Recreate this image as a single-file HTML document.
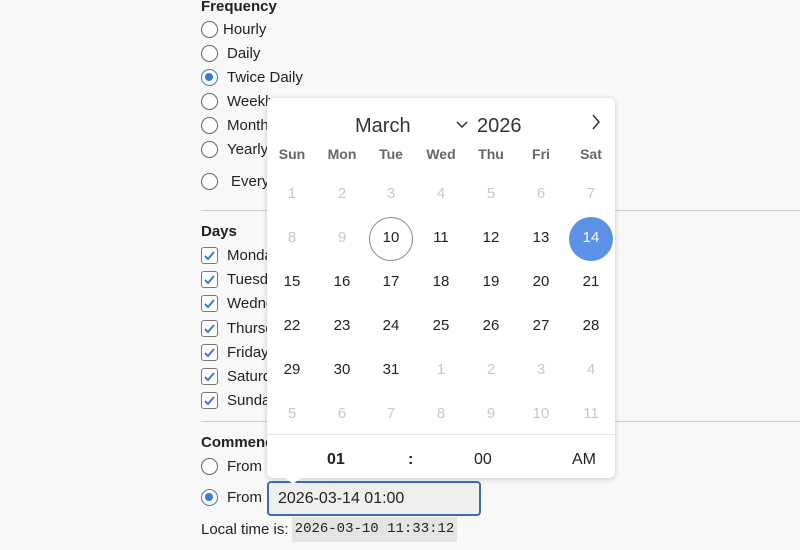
<!DOCTYPE html>
<html><head><style>
body{margin:0;width:800px;height:550px;background:#f8f8f8;font-family:"Liberation Sans",sans-serif;color:#222;position:relative;overflow:hidden}
.a{position:absolute;white-space:nowrap}
.lbl{font-size:15px;line-height:18px}
.h{font-weight:bold;font-size:15px}
.r{position:absolute;width:17px;height:17px;border:1.5px solid #666;border-radius:50%;background:#fff;box-sizing:border-box}
.r.on{border-color:#3a7bd5}
.r.on::after{content:"";position:absolute;left:3px;top:3px;width:8px;height:8px;border-radius:50%;background:#3a7bd5}
.c{position:absolute;width:17px;height:17px;border:1.5px solid #777;border-radius:3px;background:#fff;box-sizing:border-box}
.c svg{position:absolute;left:1px;top:1px}
.hr{position:absolute;left:201px;width:599px;height:1px;background:#ccc}
.pop{position:absolute;left:267px;top:98px;width:348px;height:380px;background:#fff;border-radius:6px;box-shadow:0 1px 6px rgba(0,0,0,.2)}
.d{position:absolute;width:44px;text-align:center;font-size:15px;color:#222;transform:translateX(-22px)}
.g{color:#c8c8c8}
.wk{position:absolute;width:44px;text-align:center;font-size:14px;font-weight:bold;color:#666;transform:translateX(-22px)}
</style></head><body>
<div class="a h" style="left:201px;top:-2px">Frequency</div>
<div class="r" style="left:201px;top:21px"></div><div class="a lbl" style="left:223px;top:21px">Hourly</div>
<div class="r" style="left:201px;top:45px"></div><div class="a lbl" style="left:227px;top:45px">Daily</div>
<div class="r on" style="left:201px;top:69px"></div><div class="a lbl" style="left:227px;top:69px">Twice Daily</div>
<div class="r" style="left:201px;top:93px"></div><div class="a lbl" style="left:227px;top:93px">Weekly</div>
<div class="r" style="left:201px;top:117px"></div><div class="a lbl" style="left:227px;top:117px">Monthly</div>
<div class="r" style="left:201px;top:141px"></div><div class="a lbl" style="left:227px;top:141px">Yearly</div>
<div class="r" style="left:201px;top:173px"></div><div class="a lbl" style="left:231px;top:173px">Every</div>
<div class="hr" style="top:210px"></div>
<div class="a h" style="left:201px;top:223px">Days</div>
<div id="days"></div>
<div class="hr" style="top:421px"></div>
<div class="a h" style="left:201px;top:434px">Commence</div>
<div class="r" style="left:201px;top:458px"></div><div class="a lbl" style="left:227px;top:458px">From</div>
<div class="r on" style="left:201px;top:489px"></div><div class="a lbl" style="left:227px;top:489px">From</div>
<div class="a" style="left:267px;top:481px;width:214px;height:35px;box-sizing:border-box;border:2px solid #3a6fb0;border-radius:4px;background:#efefef;font-size:16px;line-height:31px;padding-left:9px">2026-03-14 01:00</div>
<div class="a lbl" style="left:201px;top:521px">Local time is:</div>
<div class="a" style="left:292px;top:517px;width:165px;height:25px;background:#e4e4e4;font-family:'Liberation Mono',monospace;font-size:14px;line-height:25px;text-align:center">2026-03-10 11:33:12</div>
<div class="pop" id="pop">
<div class="a" style="left:88px;top:17px;font-size:20px;color:#333">March</div>
<svg class="a" style="left:189px;top:23px" width="12" height="8"><path d="M1 1l5 5 5-5" fill="none" stroke="#333" stroke-width="1.5"/></svg>
<div class="a" style="left:210px;top:17px;font-size:20px;color:#333">2026</div>
<svg class="a" style="left:324px;top:16px" width="10" height="16"><path d="M2 1l6 7-6 7" fill="none" stroke="#333" stroke-width="1.5"/></svg>
<div class="a" style="left:0;top:336px;width:348px;height:1px;background:#e4e4e4"></div>
<div class="a" style="left:60px;top:353px;font-size:16px;font-weight:bold">01</div>
<div class="a" style="left:141px;top:353px;font-size:16px;font-weight:bold">:</div>
<div class="a" style="left:207px;top:353px;font-size:16px">00</div>
<div class="a" style="left:305px;top:353px;font-size:16px">AM</div>
</div>
<svg class="a" style="left:284px;top:477px" width="18" height="8"><path d="M0 0l9 7 9-7z" fill="#fff"/></svg>
<script>
var dd=["Monday","Tuesday","Wednesday","Thursday","Friday","Saturday","Sunday"],h="";
dd.forEach(function(n,i){var y=247+i*24.2;h+='<div class="c" style="left:201px;top:'+y+'px"><svg width="13" height="13"><path d="M2 7l3 3 6-7" fill="none" stroke="#3a7bd5" stroke-width="2"/></svg></div><div class="a lbl" style="left:227px;top:'+y+'px">'+n+'</div>';});
document.getElementById("days").outerHTML=h;
var p="",cx=[25,75,124,174,224,274,324],w=["Sun","Mon","Tue","Wed","Thu","Fri","Sat"];
w.forEach(function(n,i){p+='<div class="wk" style="left:'+cx[i]+'px;top:48px">'+n+'</div>'});
var days=[];for(var i=1;i<=7;i++)days.push([i,1]);for(i=8;i<=9;i++)days.push([i,1]);for(i=10;i<=31;i++)days.push([i,0]);for(i=1;i<=11;i++)days.push([i,1]);
var ry=[82,126,170,214,258,302];
days.forEach(function(d,k){var r=Math.floor(k/7),c=k%7,x=cx[c],y=ry[r];
if(d[0]==10&&!d[1])p+='<div class="a" style="left:'+(x-22)+'px;top:'+(y-7)+'px;width:42px;height:42px;border:1px solid #888;border-radius:50%"></div>';
if(d[0]==14&&!d[1])p+='<div class="a" style="left:'+(x-22)+'px;top:'+(y-7)+'px;width:44px;height:44px;background:#5b92e5;border-radius:50%"></div>';
p+='<div class="d'+(d[1]?' g':'')+'" style="left:'+x+'px;top:'+(y+5)+'px;'+(d[0]==14&&!d[1]?'color:#fff':'')+'">'+d[0]+'</div>';});
document.getElementById("pop").insertAdjacentHTML("beforeend",p);
</script>
</body></html>
